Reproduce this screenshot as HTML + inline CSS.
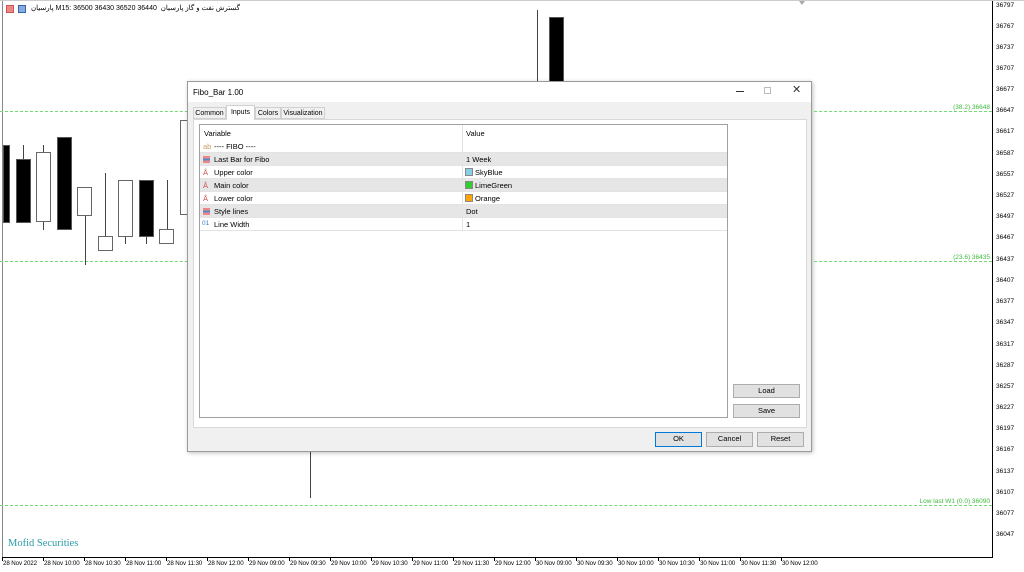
<!DOCTYPE html>
<html><head><meta charset="utf-8"><style>
*{margin:0;padding:0;box-sizing:border-box}
body{width:1024px;height:572px;background:#fff;position:relative;overflow:hidden;font-family:"Liberation Sans","Noto Sans CJK SC",sans-serif;font-size:8px;color:#000}
.a{position:absolute}
.pl{position:absolute;left:996px;font-size:6.5px;color:#000;white-space:nowrap}
.dl{position:absolute;font-size:6.2px;color:#000;top:560px;white-space:nowrap;letter-spacing:-0.1px}
.dt{position:absolute;top:557px;width:1px;height:4px;background:#000}
.blk{position:absolute;background:#000;border:1px solid #555}
.wht{position:absolute;background:#fff;border:1px solid #666}
.wk{position:absolute;width:1px;background:#444}
.dash{position:absolute;left:0;width:992px;height:0;border-top:1px dashed #74d874}
.gl{position:absolute;font-size:6.5px;color:#3dbb3d;white-space:nowrap}
.row{position:absolute;left:200px;width:527px;height:13px;border-bottom:1px solid #e3e3e3}
.row span{position:absolute;top:2px;font-size:7.5px}
.btn{position:absolute;background:#e1e1e1;border:1px solid #adadad;font-size:7.5px;text-align:center;line-height:12px}
.sw{display:inline-block;width:8px;height:8px;vertical-align:-1px;margin-right:2px;border:1px solid #888}
.ic{position:absolute;left:3px;top:3px;width:7px;height:7px}
</style></head><body>
<div class="a" style="left:2px;top:0;width:1px;height:557px;background:#888"></div>
<div class="a" style="left:992px;top:0;width:1px;height:557px;background:#000"></div>
<div class="a" style="left:2px;top:557px;width:991px;height:1px;background:#000"></div>
<div class="a" style="left:0;top:0;width:1024px;height:1px;background:#ccc"></div>
<div class="a" style="left:799px;top:1px;width:0;height:0;border-left:3px solid transparent;border-right:3px solid transparent;border-top:4px solid #aaa"></div>
<div class="a" style="left:6px;top:5px;width:8px;height:8px;background:#e88;border:1px solid #c55"></div>
<div class="a" style="left:18px;top:5px;width:8px;height:8px;background:#8ad;border:1px solid #36a"></div>
<div class="a" style="left:31px;top:4px;font-size:7px;white-space:nowrap">پارسیان M15: 36500 36430 36520 36440 &nbsp;گسترش نفت و گاز پارسیان</div>
<div class="pl" style="top:2px">36797</div><div class="pl" style="top:23px">36767</div><div class="pl" style="top:44px">36737</div><div class="pl" style="top:65px">36707</div><div class="pl" style="top:86px">36677</div><div class="pl" style="top:107px">36647</div><div class="pl" style="top:128px">36617</div><div class="pl" style="top:150px">36587</div><div class="pl" style="top:171px">36557</div><div class="pl" style="top:192px">36527</div><div class="pl" style="top:213px">36497</div><div class="pl" style="top:234px">36467</div><div class="pl" style="top:256px">36437</div><div class="pl" style="top:277px">36407</div><div class="pl" style="top:298px">36377</div><div class="pl" style="top:319px">36347</div><div class="pl" style="top:341px">36317</div><div class="pl" style="top:362px">36287</div><div class="pl" style="top:383px">36257</div><div class="pl" style="top:404px">36227</div><div class="pl" style="top:425px">36197</div><div class="pl" style="top:446px">36167</div><div class="pl" style="top:468px">36137</div><div class="pl" style="top:489px">36107</div><div class="pl" style="top:510px">36077</div><div class="pl" style="top:531px">36047</div>
<div class="dt" style="left:2px"></div><div class="dt" style="left:43px"></div><div class="dt" style="left:84px"></div><div class="dt" style="left:125px"></div><div class="dt" style="left:166px"></div><div class="dt" style="left:207px"></div><div class="dt" style="left:248px"></div><div class="dt" style="left:289px"></div><div class="dt" style="left:330px"></div><div class="dt" style="left:371px"></div><div class="dt" style="left:412px"></div><div class="dt" style="left:453px"></div><div class="dt" style="left:494px"></div><div class="dt" style="left:535px"></div><div class="dt" style="left:576px"></div><div class="dt" style="left:617px"></div><div class="dt" style="left:658px"></div><div class="dt" style="left:699px"></div><div class="dt" style="left:740px"></div><div class="dt" style="left:781px"></div>
<div class="dl" style="left:3px">28 Nov 2022</div><div class="dl" style="left:44px">28 Nov 10:00</div><div class="dl" style="left:85px">28 Nov 10:30</div><div class="dl" style="left:126px">28 Nov 11:00</div><div class="dl" style="left:167px">28 Nov 11:30</div><div class="dl" style="left:208px">28 Nov 12:00</div><div class="dl" style="left:249px">29 Nov 09:00</div><div class="dl" style="left:290px">29 Nov 09:30</div><div class="dl" style="left:331px">29 Nov 10:00</div><div class="dl" style="left:372px">29 Nov 10:30</div><div class="dl" style="left:413px">29 Nov 11:00</div><div class="dl" style="left:454px">29 Nov 11:30</div><div class="dl" style="left:495px">29 Nov 12:00</div><div class="dl" style="left:536px">30 Nov 09:00</div><div class="dl" style="left:577px">30 Nov 09:30</div><div class="dl" style="left:618px">30 Nov 10:00</div><div class="dl" style="left:659px">30 Nov 10:30</div><div class="dl" style="left:700px">30 Nov 11:00</div><div class="dl" style="left:741px">30 Nov 11:30</div><div class="dl" style="left:782px">30 Nov 12:00</div>
<div class="dash" style="top:111px"></div>
<div class="dash" style="top:261px"></div>
<div class="dash" style="top:505px"></div>
<div class="gl" style="right:34px;top:104px">(38.2) 36648</div>
<div class="gl" style="right:34px;top:254px">(23.6) 36435</div>
<div class="gl" style="right:34px;top:498px">Low last W1 (0.0) 36090</div>
<div class="blk" style="left:3px;top:145px;width:7px;height:78px"></div>
<div class="wk" style="left:23px;top:145px;height:15px"></div>
<div class="blk" style="left:16px;top:159px;width:15px;height:64px"></div>
<div class="wk" style="left:43px;top:145px;height:85px"></div>
<div class="wht" style="left:36px;top:152px;width:15px;height:70px"></div>
<div class="blk" style="left:57px;top:137px;width:15px;height:93px"></div>
<div class="wk" style="left:85px;top:215px;height:50px"></div>
<div class="wht" style="left:77px;top:187px;width:15px;height:29px"></div>
<div class="wk" style="left:105px;top:173px;height:65px"></div>
<div class="wht" style="left:98px;top:236px;width:15px;height:15px"></div>
<div class="wk" style="left:125px;top:235px;height:9px"></div>
<div class="wht" style="left:118px;top:180px;width:15px;height:57px"></div>
<div class="wk" style="left:146px;top:235px;height:9px"></div>
<div class="blk" style="left:139px;top:180px;width:15px;height:57px"></div>
<div class="wk" style="left:167px;top:180px;height:50px"></div>
<div class="wht" style="left:159px;top:229px;width:15px;height:15px"></div>
<div class="wht" style="left:180px;top:120px;width:15px;height:95px"></div>
<div class="wk" style="left:537px;top:10px;height:72px"></div>
<div class="blk" style="left:549px;top:17px;width:15px;height:66px"></div>
<div class="wk" style="left:310px;top:450px;height:48px"></div>
<div class="a" style="left:8px;top:538px;font-family:'Liberation Serif',serif;font-size:10.5px;color:#2a9aa8">Mofid Securities</div>
<div class="a" style="left:187px;top:81px;width:625px;height:371px;background:#f0f0f0;border:1px solid #9a9a9a;box-shadow:1px 1px 4px rgba(0,0,0,.25)">
 <div class="a" style="left:0;top:0;width:623px;height:20px;background:#fff"></div>
 <div class="a" style="left:5px;top:6px;font-size:8px">Fibo_Bar 1.00</div>
 <div class="a" style="left:548px;top:9px;width:8px;height:1px;background:#333"></div>
 <div class="a" style="left:576px;top:5px;width:7px;height:7px;border:1px solid #bbb"></div>
 <div class="a" style="left:604px;top:1px;font-size:11px;color:#333">✕</div>
 <div class="a" style="left:5px;top:25px;width:33px;height:12px;border:1px solid #d0d0d0;background:#f0f0f0;font-size:7px;text-align:center;line-height:11px">Common</div>
 <div class="a" style="left:38px;top:23px;width:29px;height:15px;border:1px solid #d0d0d0;border-bottom:none;background:#fff;font-size:7px;text-align:center;line-height:13px;z-index:2">Inputs</div>
 <div class="a" style="left:67px;top:25px;width:26px;height:12px;border:1px solid #d0d0d0;background:#f0f0f0;font-size:7px;text-align:center;line-height:11px">Colors</div>
 <div class="a" style="left:93px;top:25px;width:44px;height:12px;border:1px solid #d0d0d0;background:#f0f0f0;font-size:7px;text-align:center;line-height:11px">Visualization</div>
 <div class="a" style="left:5px;top:37px;width:614px;height:309px;background:#fff;border:1px solid #d9d9d9"></div>
 <div class="a" style="left:11px;top:42px;width:529px;height:294px;background:#fff;border:1px solid #a0a0a0"></div>
 <div class="a" style="left:274px;top:43px;width:1px;height:106px;background:#e3e3e3"></div>
 <div class="btn" style="left:545px;top:302px;width:67px;height:14px">Load</div>
 <div class="btn" style="left:545px;top:322px;width:67px;height:14px">Save</div>
 <div class="btn" style="left:467px;top:350px;width:47px;height:15px;border:1px solid #0078d7">OK</div>
 <div class="btn" style="left:518px;top:350px;width:47px;height:15px">Cancel</div>
 <div class="btn" style="left:569px;top:350px;width:47px;height:15px">Reset</div>
</div>
<div class="row" style="top:127px;border-bottom:none"><span style="left:4px">Variable</span><span style="left:266px">Value</span></div>
<div class="row" style="top:140px"><span style="left:3px;color:#c8a060">ab</span><span style="left:14px">---- FIBO ----</span></div>
<div class="row" style="top:153px;background:#e6e6e6"><div class="ic" style="background:linear-gradient(#e88 0 33%,#58c 33% 66%,#e88 66%)"></div><span style="left:14px">Last Bar for Fibo</span><span style="left:266px">1 Week</span></div>
<div class="row" style="top:166px"><span style="left:3px;color:#c55">&#8491;</span><span style="left:14px">Upper color</span><span style="left:265px"><i class="sw" style="background:#87ceeb"></i>SkyBlue</span></div>
<div class="row" style="top:179px;background:#e6e6e6"><span style="left:3px;color:#c55">&#8491;</span><span style="left:14px">Main color</span><span style="left:265px"><i class="sw" style="background:#32cd32"></i>LimeGreen</span></div>
<div class="row" style="top:192px"><span style="left:3px;color:#c55">&#8491;</span><span style="left:14px">Lower color</span><span style="left:265px"><i class="sw" style="background:#ffa500"></i>Orange</span></div>
<div class="row" style="top:205px;background:#e6e6e6"><div class="ic" style="background:linear-gradient(#e88 0 33%,#58c 33% 66%,#e88 66%)"></div><span style="left:14px">Style lines</span><span style="left:266px">Dot</span></div>
<div class="row" style="top:218px"><span style="left:2px;color:#3a7bc8;font-size:6.5px">01</span><span style="left:14px">Line Width</span><span style="left:266px">1</span></div>
</body></html>
